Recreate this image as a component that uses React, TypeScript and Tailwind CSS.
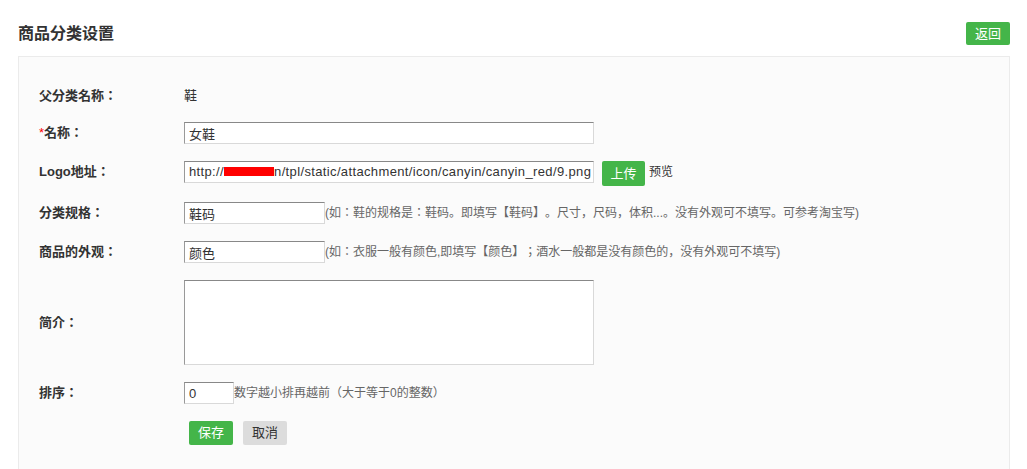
const font = { fontFamily: '"Liberation Sans", "Noto Sans CJK JP", sans-serif' };

function Label({ children, required }: { children: React.ReactNode; required?: boolean }) {
  return (
    <div className="w-[145px] shrink-0 text-[13px] font-bold leading-[22px] text-[#333]">
      {required && <span className="font-normal text-[#f00]">*</span>}
      {children}
    </div>
  );
}

const inputCls =
  "h-[22px] border border-[#d9d9d9] border-t-[#888] border-l-[#999] bg-white px-[4px] text-[13px] leading-[20px] text-[#333] outline-none";

export default function App() {
  return (
    <div className="min-h-[469px] bg-white pl-[18px] pr-[17px] [text-spacing-trim:space-all]" style={font}>
      <div className="flex items-end justify-between pt-[22px]">
        <h1 className="text-[16px] font-bold leading-[22px] text-[#333]">商品分类设置</h1>
        <button className="h-[23px] w-[44px] rounded-[2px] bg-[#44b549] text-[13px] leading-[23px] text-white">
          返回
        </button>
      </div>

      <div className="mt-[11px] h-[420px] border border-[#ebebeb] bg-[#fbfbfb] pl-[20px] pt-[28px]">
        <div className="flex h-[22px] items-start">
          <Label>父分类名称：</Label>
          <span className="text-[13px] leading-[22px] text-[#333]">鞋</span>
        </div>

        <div className="mt-[15px] flex items-start">
          <Label required>名称：</Label>
          <input className={`${inputCls} w-[410px]`} defaultValue="女鞋" />
        </div>

        <div className="mt-[17px] flex items-start">
          <Label>Logo地址：</Label>
          <div className={`${inputCls} w-[410px] overflow-hidden whitespace-nowrap tracking-[0.36px]`}>
            http://
            <span className="relative inline-block h-[20px] w-[50px] overflow-hidden align-top">
              <span className="absolute left-0 right-0 top-[5px] h-[9px] bg-[#f00]" />
            </span>
            n/tpl/static/attachment/icon/canyin/canyin_red/9.png
          </div>
          <button className="ml-[8px] h-[25px] w-[43px] rounded-[2px] bg-[#44b549] text-[13px] leading-[25px] text-white">
            上传
          </button>
          <span className="ml-[4px] text-[12px] leading-[22px] text-[#333]">预览</span>
        </div>

        <div className="mt-[16px] flex items-start">
          <Label>分类规格：</Label>
          <input className={`${inputCls} w-[141px]`} defaultValue="鞋码" />
          <span className="text-[12px] leading-[22px] text-[#666]">
            (如：鞋的规格是：鞋码。即填写【鞋码】。尺寸，尺码，体积...。没有外观可不填写。可参考淘宝写)
          </span>
        </div>

        <div className="mt-[17px] flex items-start">
          <Label>商品的外观：</Label>
          <input className={`${inputCls} w-[141px]`} defaultValue="颜色" />
          <span className="text-[12px] leading-[22px] text-[#666]">
            (如：衣服一般有颜色,即填写【颜色】；酒水一般都是没有颜色的，没有外观可不填写)
          </span>
        </div>

        <div className="mt-[17px] flex items-center">
          <Label>简介：</Label>
          <textarea className="block h-[85px] w-[410px] resize-none border border-[#d9d9d9] border-t-[#888] border-l-[#999] bg-white outline-none" />
        </div>

        <div className="mt-[17px] flex items-start">
          <Label>排序：</Label>
          <input className={`${inputCls} w-[50px]`} defaultValue="0" />
          <span className="text-[12px] leading-[22px] text-[#666]">数字越小排再越前（大于等于0的整数）</span>
        </div>

        <div className="mt-[17px] flex gap-[10px] pl-[150px]">
          <button className="h-[24px] w-[44px] rounded-[2px] bg-[#44b549] text-[13px] leading-[24px] text-white">
            保存
          </button>
          <button className="h-[24px] w-[44px] rounded-[2px] bg-[#dcdcdc] text-[13px] leading-[24px] text-[#333]">
            取消
          </button>
        </div>
      </div>
    </div>
  );
}
